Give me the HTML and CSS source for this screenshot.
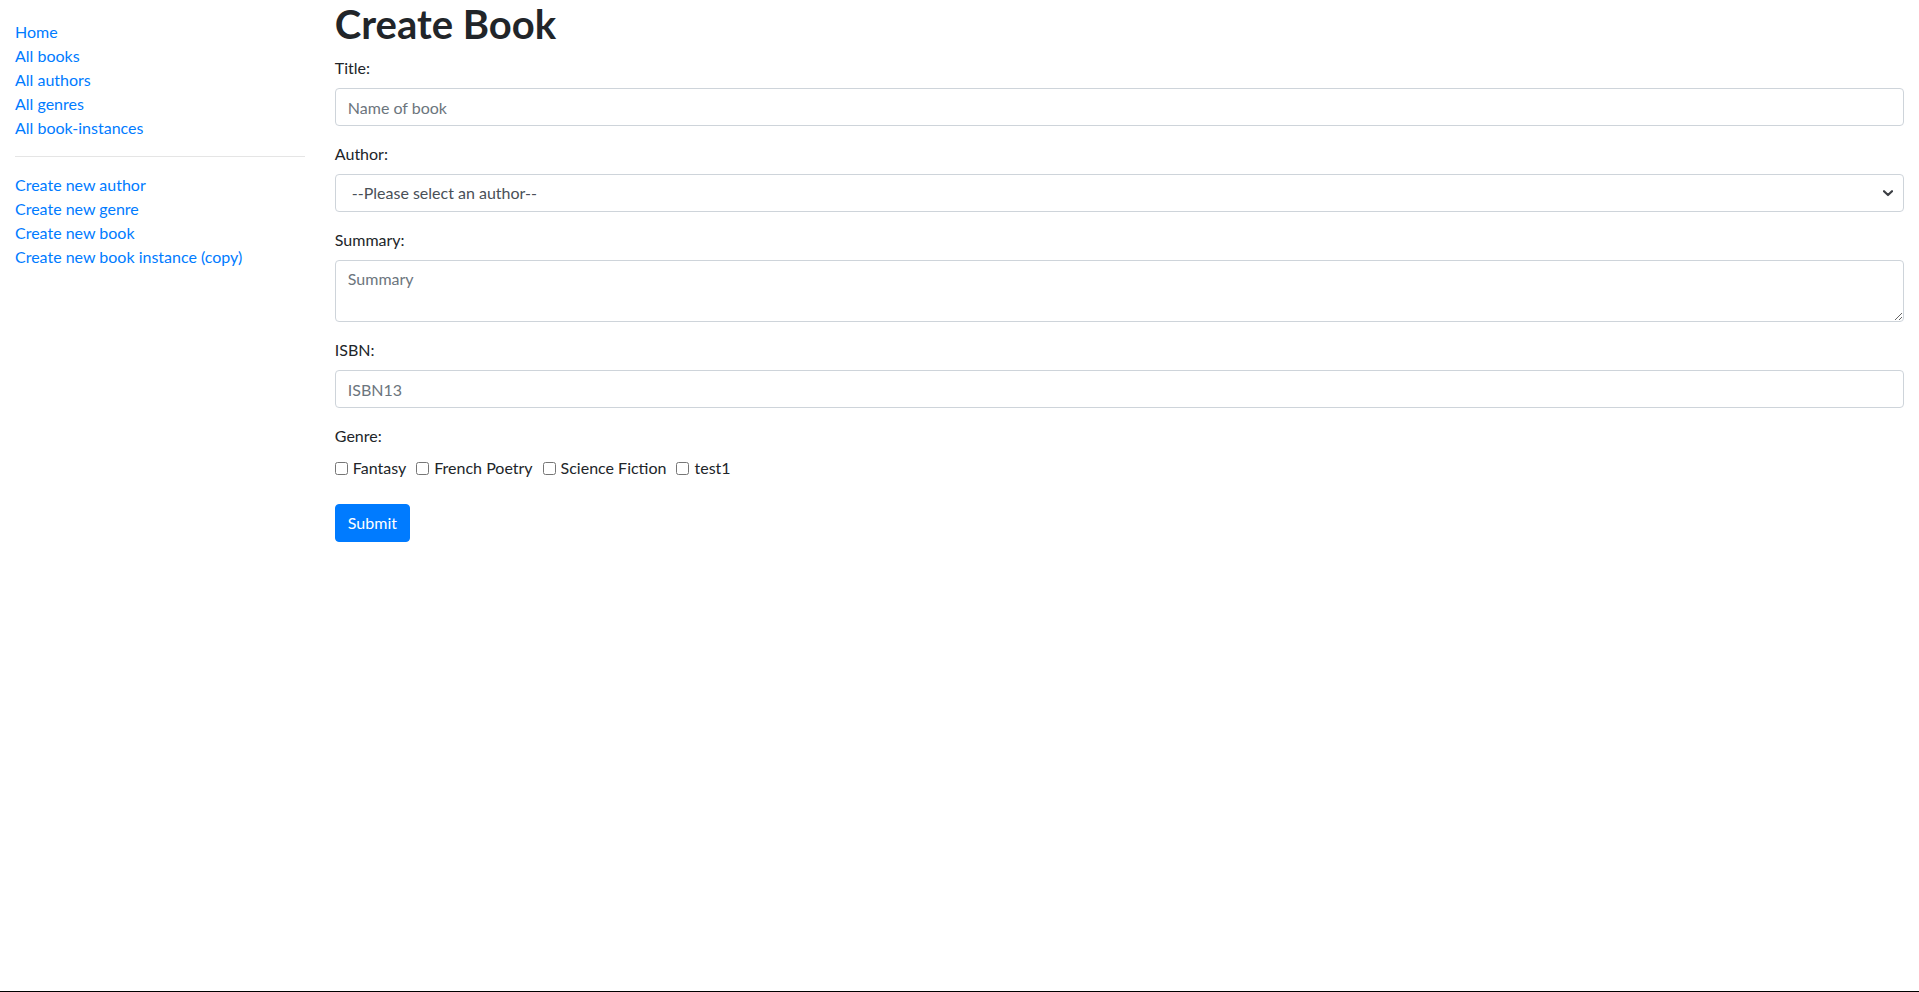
FILE: index.html
```html
<!DOCTYPE html>
<html lang="en">
<head>
<meta charset="utf-8">
<title>Create Book</title>
<link rel="stylesheet" href="styles.css">
</head>
<body>
<div class="container">
  <div class="row">
    <aside class="sidebar">
      <ul class="sidebar-nav">
        <li><a href="#">Home</a></li>
        <li><a href="#">All books</a></li>
        <li><a href="#">All authors</a></li>
        <li><a href="#">All genres</a></li>
        <li><a href="#">All book-instances</a></li>
        <li><hr class="divider"></li>
        <li><a href="#">Create new author</a></li>
        <li><a href="#">Create new genre</a></li>
        <li><a href="#">Create new book</a></li>
        <li><a href="#">Create new book instance (copy)</a></li>
      </ul>
    </aside>
    <main class="content">
      <h1 class="title">Create Book</h1>
      <form class="form">
        <div class="form-group">
          <label class="label" for="title">Title:</label>
          <input class="form-control" id="title" type="text" placeholder="Name of book">
        </div>
        <div class="form-group">
          <label class="label" for="author">Author:</label>
          <div class="select-wrap">
            <select class="form-control select" id="author">
              <option>--Please select an author--</option>
            </select>
            <svg class="chevron" width="10" height="7" viewBox="0 0 10 7"><path d="M1 1.2 L5 5 L9 1.2" fill="none" stroke="#3c3f44" stroke-width="2.2" stroke-linecap="round" stroke-linejoin="round"/></svg>
          </div>
        </div>
        <div class="form-group">
          <label class="label" for="summary">Summary:</label>
          <textarea class="form-control textarea" id="summary" rows="2" placeholder="Summary"></textarea>
        </div>
        <div class="form-group">
          <label class="label" for="isbn">ISBN:</label>
          <input class="form-control" id="isbn" type="text" placeholder="ISBN13">
        </div>
        <div class="form-group">
          <label class="label">Genre:</label>
          <div class="genres"><div class="genre"><input class="checkbox" type="checkbox" id="g1"><label class="label" for="g1">Fantasy</label></div><div class="genre"><input class="checkbox" type="checkbox" id="g2"><label class="label" for="g2">French Poetry</label></div><div class="genre"><input class="checkbox" type="checkbox" id="g3"><label class="label" for="g3">Science Fiction</label></div><div class="genre"><input class="checkbox" type="checkbox" id="g4"><label class="label" for="g4">test1</label></div></div>
        </div>
        <button class="btn" type="button">Submit</button>
      </form>
    </main>
  </div>
</div>
<div class="bottom-line"></div>
</body>
</html>
```

FILE: styles.css
```css
* { box-sizing: border-box; }
html, body { margin: 0; padding: 0; }
body {
  font-family: "Lato", "Liberation Sans", sans-serif;
  font-size: 16px;
  line-height: 1.5;
  color: #212529;
  background: #fff;
}
.container { padding: 0 15px; }
.row { display: flex; margin: 0 -15px; }
.sidebar { flex: 0 0 16.6667%; max-width: 16.6667%; padding: 0 15px; }
.content { flex: 0 0 83.3333%; max-width: 83.3333%; padding: 0 15px; }
.sidebar-nav { margin: 20px 0 0; padding: 0; list-style: none; }
.sidebar-nav a { color: #007bff; text-decoration: none; }
.divider { margin: 16px 0; border: 0; border-top: 1px solid rgba(0,0,0,.1); }
.title { margin: 0 0 8px; font-size: 40px; font-weight: 700; line-height: 1.2; }
.form { margin: 0; }
.form-group { margin-bottom: 16px; }
.label { display: inline-block; margin-bottom: 8px; }
.form-control {
  display: block; width: 100%; height: 38px;
  padding: 6px 12px; font: inherit; font-size: 16px; line-height: 1.5;
  color: #495057; background: #fff;
  border: 1px solid #ced4da; border-radius: 4px;
}
.form-control::placeholder { color: #6c757d; opacity: 1; }
.select-wrap { position: relative; }
.select { appearance: none; -webkit-appearance: none; padding-left: 16px; }
.chevron { position: absolute; right: 11px; top: 16px; pointer-events: none; }
.textarea { height: 62px; resize: vertical; overflow: auto; }
.genres { display: block; }
.genre { display: inline; padding-right: 10px; }
.checkbox { width: 13px; height: 13px; margin: 3px 5px 3px 0; vertical-align: -1px; }
.btn {
  display: inline-block; height: 38px; padding: 6px 12px;
  font: inherit; font-size: 16px; line-height: 1.5;
  color: #fff; background: #007bff; border: 1px solid #007bff; border-radius: 4px;
}
.bottom-line { position: fixed; left: 0; right: 0; bottom: 0; height: 1px; background: #000; }
```
